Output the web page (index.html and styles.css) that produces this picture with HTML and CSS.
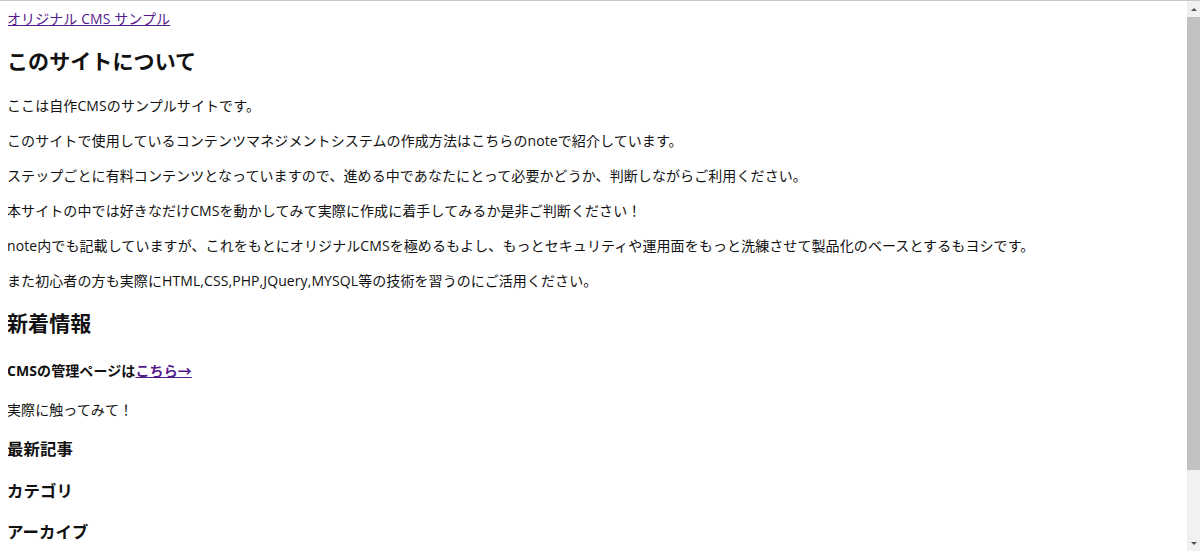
FILE: index.html
```html
<!DOCTYPE html>
<html lang="ja">
<head>
<meta charset="utf-8">
<title>オリジナル CMS サンプル</title>
<link rel="stylesheet" href="styles.css">
</head>
<body>
<div class="topline"></div>
<header class="site-header">
  <a class="site-link" href="#">オリジナル CMS サンプル</a>
</header>
<main>
  <h2 class="section-title">このサイトについて</h2>
  <p>ここは自作CMSのサンプルサイトです。</p>
  <p>このサイトで使用しているコンテンツマネジメントシステムの作成方法はこちらのnoteで紹介しています。</p>
  <p>ステップごとに有料コンテンツとなっていますので、進める中であなたにとって必要かどうか、判断しながらご利用ください。</p>
  <p>本サイトの中では好きなだけCMSを動かしてみて実際に作成に着手してみるか是非ご判断ください！</p>
  <p>note内でも記載していますが、これをもとにオリジナルCMSを極めるもよし、もっとセキュリティや運用面をもっと洗練させて製品化のベースとするもヨシです。</p>
  <p>また初心者の方も実際にHTML,CSS,PHP,JQuery,MYSQL等の技術を習うのにご活用ください。</p>
  <h2 class="section-title">新着情報</h2>
  <h4 class="admin">CMSの管理ページは<a class="site-link" href="#">こちら→</a></h4>
  <p>実際に触ってみて！</p>
  <h3 class="sub-title">最新記事</h3>
  <h3 class="sub-title">カテゴリ</h3>
  <h3 class="sub-title">アーカイブ</h3>
</main>
<div class="scrollbar">
  <div class="sb-arrow sb-up"></div>
  <div class="sb-track"><div class="sb-thumb"></div></div>
  <div class="sb-arrow sb-down"></div>
</div>
</body>
</html>
```

FILE: styles.css
```css
html, body {
  background: #ffffff;
}
body {
  margin: 8px;
  font-family: "Open Sans", "Noto Sans CJK JP", sans-serif;
  font-size: 14px;
  line-height: 1.5;
  letter-spacing: 0.09px;
  color: #111;
}
.topline {
  position: fixed;
  top: 0;
  left: 0;
  right: 0;
  height: 1px;
  background: #c8c8c8;
}
.site-header {
  margin-left: -1px;
}
main {
  margin-left: -1px;
}
.site-link {
  color: #551a8b;
  text-decoration: underline;
}
p {
  margin: 14px 0;
}
.section-title {
  font-size: 21px;
  font-weight: bold;
  margin: 17px 0;
  line-height: 1.5;
}
.admin {
  font-size: 14px;
  font-weight: bold;
  margin: 21px 0 18px;
}
.sub-title {
  font-size: 16.4px;
  font-weight: bold;
  margin: 17px 0 16px;
  line-height: 1.5;
}
.scrollbar {
  position: fixed;
  top: 1px;
  right: 0;
  bottom: 0;
  width: 13px;
  background: #f1f1f1;
  display: flex;
  flex-direction: column;
}
.sb-arrow {
  height: 16px;
  display: flex;
  align-items: center;
  justify-content: center;
}
.sb-up::before {
  content: "";
  border-left: 3px solid transparent;
  border-right: 3px solid transparent;
  border-bottom: 3px solid #505050;
}
.sb-down::before {
  content: "";
  border-left: 3px solid transparent;
  border-right: 3px solid transparent;
  border-top: 3px solid #505050;
}
.sb-track {
  flex: 1;
}
.sb-thumb {
  height: 453px;
  background: #c1c1c1;
}
```
